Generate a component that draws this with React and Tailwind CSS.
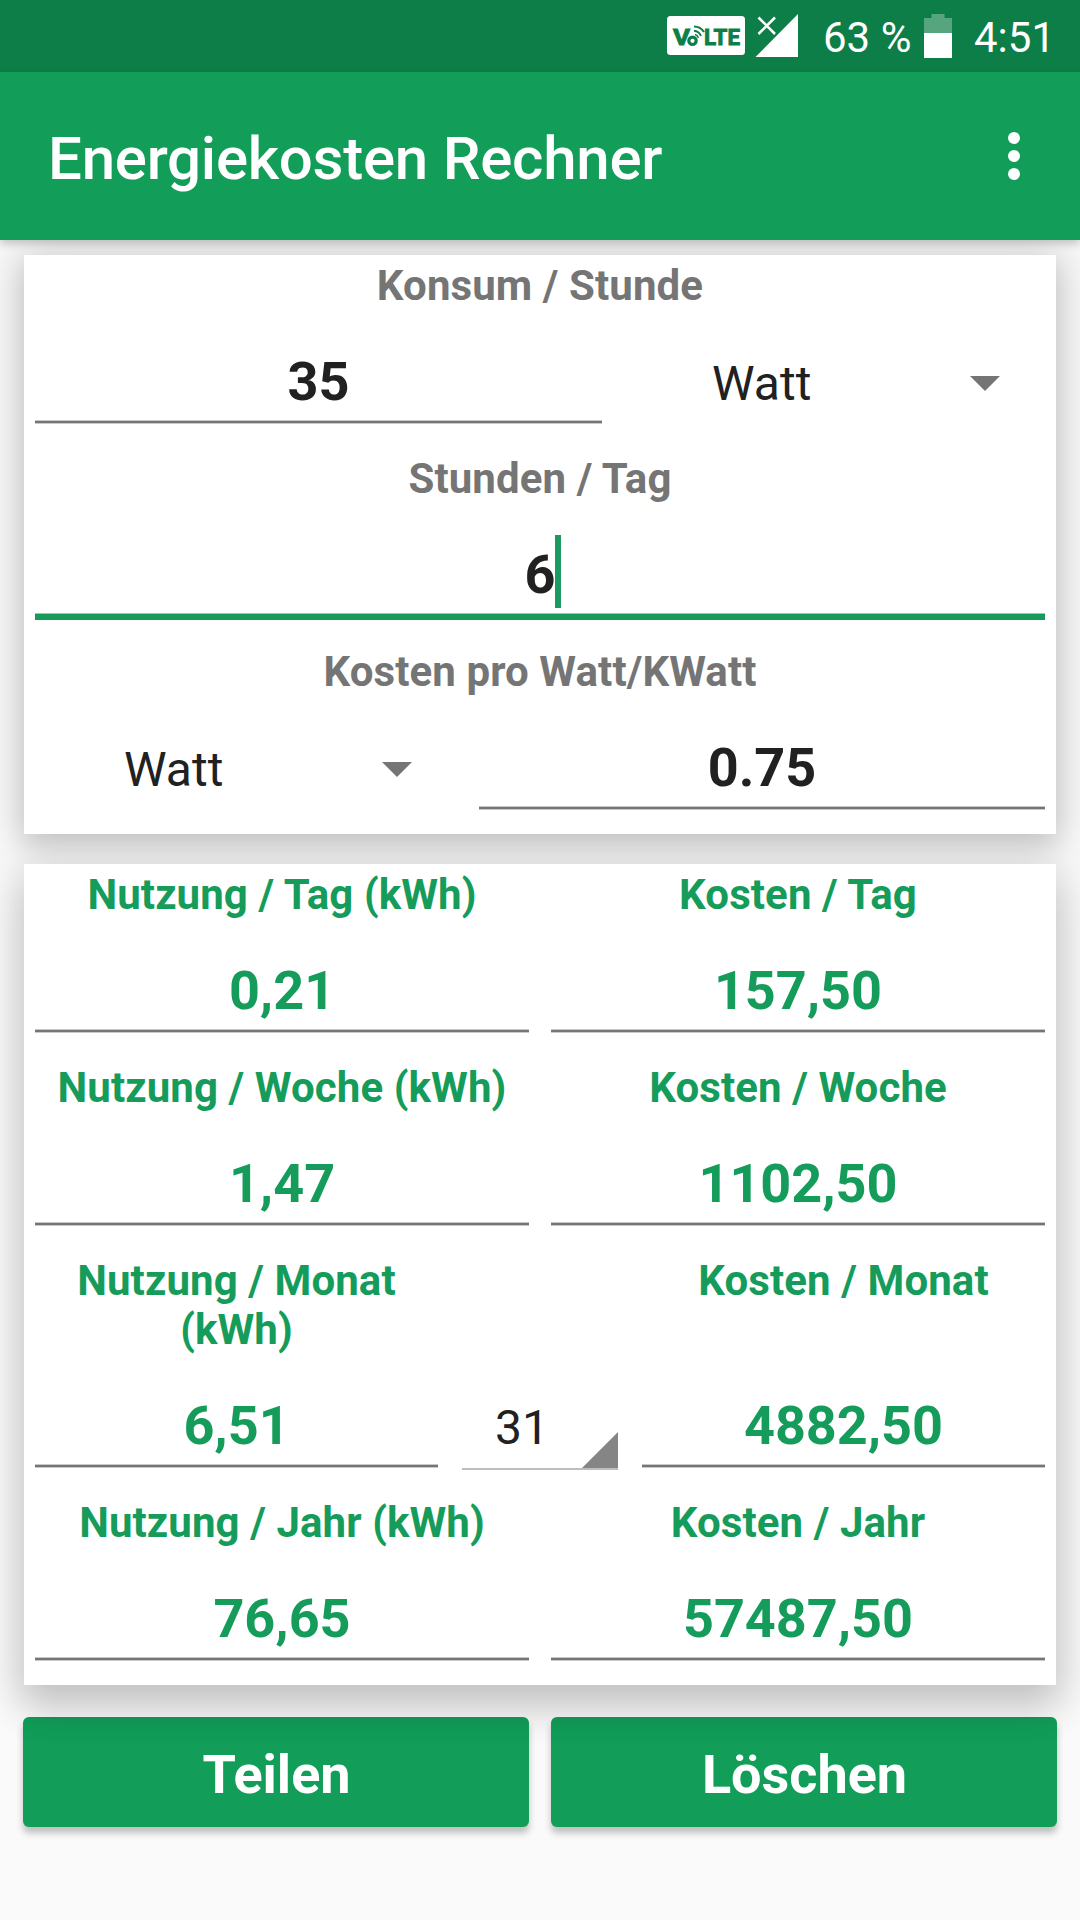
function Line({ focused }) {
  return focused ? (
    <div className="mt-[7px] h-[7px] w-full shrink-0 border-t border-[#8fceb0] bg-[#159c5b]" />
  ) : (
    <div className="mt-[7px] h-[4px] w-full shrink-0 border-y border-[#c9c9c9] bg-[#757575]" />
  );
}

function Value({ children, className = "" }) {
  return (
    <div className={`mt-[40px] flex h-[63px] shrink-0 items-center justify-center text-[54px] leading-[63px] font-bold ${className}`}>
      {children}
    </div>
  );
}

function Label({ children, className = "" }) {
  return (
    <div className={`shrink-0 text-center text-[42px] leading-[49px] font-bold tracking-[0.1px] ${className}`}>{children}</div>
  );
}

function Caret() {
  return (
    <svg width="30" height="15" viewBox="0 0 30 15" className="block shrink-0">
      <path d="M0 0H30L15 15Z" fill="#757575" />
    </svg>
  );
}

function ResultField({ label, value, className = "w-[494px]" }) {
  return (
    <div className={`flex flex-col justify-between text-[#159c5b] ${className}`}>
      <Label>{label}</Label>
      <div>
        <Value>{value}</Value>
        <Line />
      </div>
    </div>
  );
}

function StatusBar() {
  return (
    <div className="flex h-[72px] items-start bg-[#0d7e47] pl-[667px] text-[42px] leading-[49px] text-white">
      <svg width="78" height="39" viewBox="0 0 78 39" className="mt-[16px] shrink-0">
        <rect width="78" height="39" rx="3.5" fill="#fff" />
        <g fill="#0d7e47" stroke="#0d7e47" strokeWidth="0.9" fontFamily="Roboto, sans-serif" fontWeight="700">
          <text x="6" y="28.5" fontSize="22.5" textLength="17" lengthAdjust="spacingAndGlyphs">V</text>
          <text x="37" y="28.5" fontSize="22.5" textLength="36" lengthAdjust="spacingAndGlyphs">LTE</text>
        </g>
        <g fill="none" stroke="#0d7e47">
          <circle cx="25.5" cy="24.8" r="3.7" strokeWidth="3.200" />
          <path d="M27 10.500Q33.500 10.500 37 16" strokeWidth="2.200" />
          <path d="M27 14.700Q32 15 34 20" strokeWidth="1.900" />
          <path d="M28 18.500Q30.500 19 31.500 22" strokeWidth="1.400" />
        </g>
      </svg>
      <svg width="44" height="44" viewBox="0 0 44 44" className="mt-[14px] ml-[10px] shrink-0">
        <path d="M0.500 43H43V0Z" fill="#fff" />
        <path d="M3 4L20 20M20 4L3 20" stroke="#0d7e47" strokeWidth="5" />
        <path d="M3.500 3.500L20 20M20 3.500L3.500 20" stroke="#fff" strokeWidth="2.600" />
      </svg>
      <span className="mt-[13px] ml-[24px] w-[96px] whitespace-nowrap">63 %</span>
      <svg width="28" height="44" viewBox="0 0 28 44" className="mt-[14px] ml-[5px] shrink-0">
        <path d="M7.500 0H20.500V4H28V19H0V4H7.500Z" fill="#56a57e" />
        <path d="M0 19H28V44H0Z" fill="#fff" />
      </svg>
      <span className="mt-[13px] ml-[22px]">4:51</span>
    </div>
  );
}

export default function App() {
  return (
    <div className="h-[1920px] w-[1080px] overflow-hidden bg-[#fafafa] font-['Roboto',sans-serif]">
      <StatusBar />
      <header className="relative z-10 flex h-[168px] items-center justify-between bg-[#129e59] pr-[60px] pl-[48px] text-white shadow-[0_4px_8px_rgba(0,0,0,0.2)]">
        <h1 className="pt-[6px] text-[60px] leading-[70px] font-medium tracking-[-0.25px]">Energiekosten Rechner</h1>
        <svg width="12" height="48" viewBox="0 0 12 48">
          <circle cx="6" cy="6" r="6" fill="#fff" />
          <circle cx="6" cy="24" r="6" fill="#fff" />
          <circle cx="6" cy="42" r="6" fill="#fff" />
        </svg>
      </header>

      <main className="flex flex-col items-center pt-[15px]">
        <section className="relative h-[579px] w-[1032px] bg-white px-[11px] pt-[6px] shadow-[0_10px_24px_rgba(0,0,0,0.14),0_0_44px_10px_rgba(0,0,0,0.12)]">
          <div className="h-[193px]">
            <Label className="text-[#757575]">Konsum / Stunde</Label>
            <div className="flex">
              <div className="w-[567px]">
                <Value className="text-[#212121]">35</Value>
                <Line />
              </div>
              <div className="mt-[45px] flex h-[57px] flex-1 items-center justify-between pr-[45px] pl-[110px] text-[48px] leading-[57px] text-[#212121]">
                <span>Watt</span>
                <Caret />
              </div>
            </div>
          </div>
          <div className="h-[193px]">
            <Label className="text-[#757575]">Stunden / Tag</Label>
            <Value className="text-[#212121]">
              <span className="relative">
                6
                <span className="absolute top-[-8px] right-[-6px] h-[73px] w-[6px] bg-[#1c9a60]" />
              </span>
            </Value>
            <Line focused />
          </div>
          <div className="h-[180px]">
            <Label className="text-[#757575]">Kosten pro Watt/KWatt</Label>
            <div className="flex">
              <div className="mt-[45px] flex h-[57px] w-[444px] items-center justify-between pr-[67px] pl-[89px] text-[48px] leading-[57px] text-[#212121]">
                <span>Watt</span>
                <Caret />
              </div>
              <div className="w-[566px]">
                <Value className="text-[#212121]">0.75</Value>
                <Line />
              </div>
            </div>
          </div>
        </section>

        <section className="relative mt-[30px] flex h-[821px] w-[1032px] flex-col gap-[30px] bg-white px-[11px] pt-[6px] shadow-[0_24px_36px_rgba(0,0,0,0.12),0_10px_40px_8px_rgba(0,0,0,0.13)] [clip-path:inset(-30px_-60px_-120px_-60px)]">
          <div className="flex h-[163px] justify-between">
            <ResultField label="Nutzung / Tag (kWh)" value="0,21" />
            <ResultField label="Kosten / Tag" value="157,50" />
          </div>
          <div className="flex h-[163px] justify-between">
            <ResultField label="Nutzung / Woche (kWh)" value="1,47" />
            <ResultField label="Kosten / Woche" value="1102,50" />
          </div>
          <div className="flex h-[212px] justify-between">
            <ResultField label="Nutzung / Monat (kWh)" value="6,51" className="w-[403px]" />
            <div className="flex w-[156px] flex-col justify-end">
              <div className="flex h-[77px] items-start justify-between pt-[8px] pl-[33px] text-[48px] leading-[57px] text-[#212121]">
                <span>31</span>
                <svg width="36" height="36" viewBox="0 0 36 36" className="self-end">
                  <path d="M36 0V36H0Z" fill="#858585" />
                </svg>
              </div>
              <div className="mb-[-2px] h-[2px] bg-[#bdbdbd]" />
            </div>
            <ResultField label="Kosten / Monat" value="4882,50" className="w-[403px]" />
          </div>
          <div className="flex h-[163px] justify-between">
            <ResultField label="Nutzung / Jahr (kWh)" value="76,65" />
            <ResultField label="Kosten / Jahr" value="57487,50" />
          </div>
        </section>

        <div className="mt-[32px] flex gap-[22px] text-[54px] font-bold text-white">
          <button className="h-[110px] w-[506px] rounded-[6px] bg-[#129e59] pt-[4px] pl-px shadow-[0_6px_7px_rgba(0,0,0,0.24)]">Teilen</button>
          <button className="h-[110px] w-[506px] rounded-[6px] bg-[#129e59] pt-[4px] pl-px shadow-[0_6px_7px_rgba(0,0,0,0.24)]">Löschen</button>
        </div>
      </main>
    </div>
  );
}
